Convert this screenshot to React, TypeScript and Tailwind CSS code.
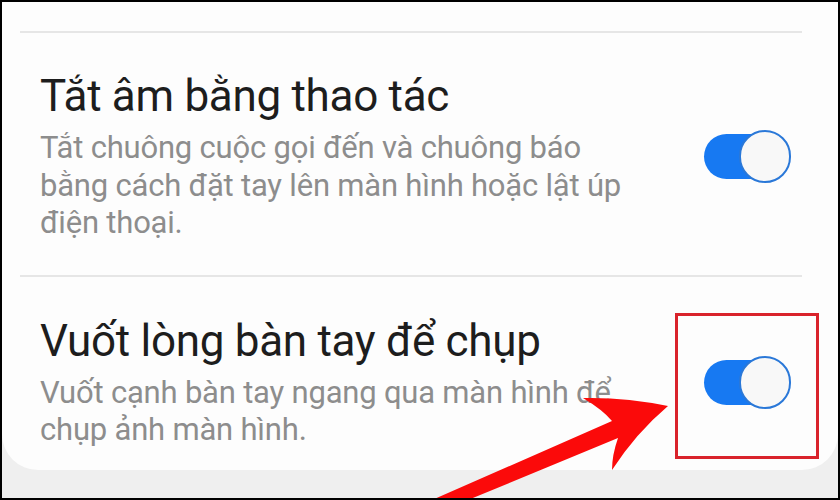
import React from 'react';

function Toggle() {
    return (
        <div className="relative w-[87px] h-[53px] shrink-0">
            <div className="absolute left-0 top-[4px] w-[72px] h-[45px] rounded-full bg-[#1779f2]" />
            <div className="absolute right-0 top-0 w-[52px] h-[53px] rounded-full border-2 border-[#2a78d8] bg-[#f8f8f8]" />
        </div>
    );
}

function SettingRow({ title, desc, pt, pb }: { title: string; desc: string[]; pt: string; pb: string }) {
    return (
        <div className={`flex items-center pl-[38px] pr-[47px] ${pt} ${pb}`}>
            <div className="flex-1 flex flex-col gap-[9px]">
                <div className="text-[44px] leading-[48px] text-[#1d1d1d] tracking-[-0.3px]">{title}</div>
                <div className="text-[31px] leading-[37.5px] text-[#8d8d8d] tracking-[-0.2px]">
                    {desc.map((line) => (
                        <div key={line} className="whitespace-nowrap">{line}</div>
                    ))}
                </div>
            </div>
            <Toggle />
        </div>
    );
}

export default function App() {
    return (
        <div
            className="relative w-[840px] h-[500px] border-2 border-black bg-[#efefef] overflow-hidden"
            style={{ fontFamily: 'Roboto, "Noto Sans", sans-serif' }}
        >
            <div className="bg-[#fdfdfd] rounded-b-[36px] pt-[29px] h-[468px]">
                <div className="ml-[18px] w-[782px] h-[2px] bg-[#e6e6e6]" />
                <SettingRow
                    title="Tắt âm bằng thao tác"
                    desc={['Tắt chuông cuộc gọi đến và chuông báo', 'bằng cách đặt tay lên màn hình hoặc lật úp', 'điện thoại.']}
                    pt="pt-[39px]"
                    pb="pb-[33px]"
                />
                <div className="ml-[18px] w-[782px] h-[2px] bg-[#e6e6e6]" />
                <SettingRow
                    title="Vuốt lòng bàn tay để chụp"
                    desc={['Vuốt cạnh bàn tay ngang qua màn hình để', 'chụp ảnh màn hình.']}
                    pt="pt-[40px]"
                    pb="pb-[18px]"
                />
            </div>

            <div className="absolute left-[673px] top-[311px] w-[144px] h-[146px] border-[3px] border-[#d9232b]" />

            <svg className="absolute left-[-2px] top-[-2px]" width="840" height="500" viewBox="0 0 840 500">
                <path
                    d="M 668 406 Q 625 397 583 398 Q 603 410 612 421 L 432 500 L 468 500 L 618 438 Q 612 455 612 470 Q 636 433 668 406 Z"
                    fill="#fb0a0a"
                />
            </svg>
        </div>
    );
}
